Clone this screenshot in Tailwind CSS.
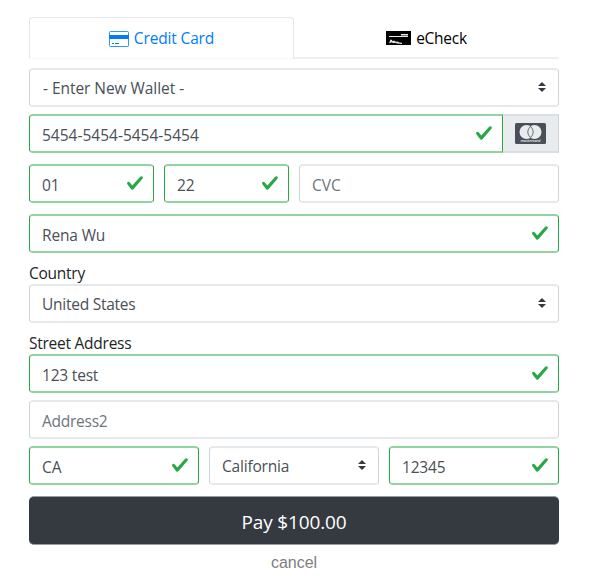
<!DOCTYPE html>
<html lang="en">
<head>
<meta charset="utf-8">
<title>Payment</title>
<script src="https://cdn.jsdelivr.net/npm/@tailwindcss/browser@4"></script>
</head>
<body class="bg-white font-['Open_Sans',sans-serif] text-[15.5px] leading-6 text-[#495057]">
<svg class="hidden">
  <symbol id="check" viewBox="0 0 8 8"><path fill="#28a745" d="M2.3 6.73L.6 4.53c-.4-1.04.46-1.4 1.1-.8l1.1 1.4 3.4-3.8c.6-.63 1.6-.27 1.2.7l-4 4.6c-.43.5-.8.4-1.1.1z"/></symbol>
  <symbol id="sort" viewBox="0 0 4 5"><path fill="#343a40" d="M2 0L0 2h4zm0 5L0 3h4z"/></symbol>
</svg>
<main class="ml-[29px] flex w-[530px] flex-col pt-[17px]">
  <nav class="flex h-[42px]">
    <div class="flex w-[265px] justify-center gap-[5px] rounded-t border border-[#e4e7ea] border-b-[#f8f8f8] pt-[8px] text-[#007bff]">
      <svg class="mt-[5px] h-4 w-5" viewBox="0 0 20 16"><rect x=".5" y=".5" width="19" height="15" rx="1" fill="#fff" stroke="#007bff" stroke-opacity=".8"/><path fill="#007bff" d="M0 4h20v4H0zM3 12h2v1H3zM6 12h4v1H6z"/></svg>
      <span class="tracking-[-0.15px]">Credit Card</span>
    </div>
    <div class="flex w-[265px] justify-center gap-[5px] border-b-2 border-[#f0f0f0] pt-[9px] text-black">
      <svg class="mt-[5px] h-[14px] w-[25px]" viewBox="0 0 25 14"><path d="M0 0h25v14H0z"/><path fill="#e8e8e4" d="M3 5h19v1H3zM15 3h7v1.500h-7z"/><path fill="#e8e8e4" d="M3 12.500L4.500 8.500 6 9 6.500 10.200 8 9.500 10 10.800 12 10.500 13 11.500 16 11.800V13L11 12.500 9 11.800 7.500 12.300 5.500 11.300z"/></svg>
      <span class="tracking-[-0.25px]">eCheck</span>
    </div>
  </nav>

  <div class="mt-[9px] flex h-[39px] justify-between rounded border border-y-2 border-[#ced4da] border-y-[#e6e9ec] pr-3 pl-[13px] pt-[6px]">
    <span class="tracking-[-0.05px]">- Enter New Wallet -</span><svg class="mt-[6px] h-[10px] w-2"><use href="#sort"/></svg>
  </div>

  <div class="mt-[7px] flex h-[39px]">
    <div class="flex w-[474px] justify-between rounded-l border border-y-2 border-[#28a745] border-y-[#93d3a2] pr-[9px] pl-3 pt-[7px]">
      <span>5454-5454-5454-5454</span><svg class="mt-[1px] size-[18px]"><use href="#check"/></svg>
    </div>
    <div class="flex w-[56px] border-y-2 border-r border-[#ced4da] border-y-[#dbdfe3] bg-[#e9ecef] pt-[7px] pl-3">
      <svg class="h-[21px] w-[31px]" viewBox="0 0 31 21"><rect width="31" height="21" rx="1.500" fill="#495057"/><circle cx="11.500" cy="9" r="7" fill="#e9ecef"/><circle cx="19.500" cy="9" r="7" fill="#e9ecef"/><path fill="#e9ecef" stroke="#495057" stroke-width=".8" d="M15.500 3.300Q10 9 15.500 14.700Q21 9 15.500 3.300z"/><text x="15.500" y="19.300" text-anchor="middle" textLength="20" font-family="Open Sans" font-weight="600" font-size="4" fill="#e9ecef">mastercard</text></svg>
    </div>
  </div>

  <div class="mt-[11px] flex h-[39px] gap-[10px]">
    <div class="flex w-[125px] justify-between rounded border border-y-2 border-[#28a745] border-y-[#93d3a2] pr-[9px] pl-3 pt-[7px]"><span class="tracking-[-0.2px]">01</span><svg class="mt-[1px] size-[18px]"><use href="#check"/></svg></div>
    <div class="flex w-[125px] justify-between rounded border border-y-2 border-[#28a745] border-y-[#93d3a2] pr-[9px] pl-3 pt-[7px]"><span class="tracking-[-0.2px]">22</span><svg class="mt-[1px] size-[18px]"><use href="#check"/></svg></div>
    <div class="flex-1 rounded border border-y-2 border-[#ced4da] border-y-[#e6e9ec] pl-3 pt-[7px] text-[#6c757d]">CVC</div>
  </div>

  <div class="mt-[11px] flex h-[39px] justify-between rounded border border-y-2 border-[#28a745] border-y-[#93d3a2] pr-[9px] pl-3 pt-[7px]"><span class="tracking-[-0.15px]">Rena Wu</span><svg class="mt-[1px] size-[18px]"><use href="#check"/></svg></div>

  <label class="mt-[8px] h-[23px] tracking-[-0.25px] text-[#212529]">Country</label>
  <div class="flex h-[39px] justify-between rounded border border-y-2 border-[#ced4da] border-y-[#e6e9ec] pr-3 pl-3 pt-[6px]"><span class="tracking-[-0.25px]">United States</span><svg class="mt-[6px] h-[10px] w-2"><use href="#sort"/></svg></div>

  <label class="mt-[8px] h-[23px] tracking-[-0.25px] text-[#212529]">Street Address</label>
  <div class="flex h-[39px] justify-between rounded border border-y-2 border-[#28a745] border-y-[#93d3a2] pr-[9px] pl-3 pt-[7px]"><span class="tracking-[-0.2px]">123 test</span><svg class="mt-[1px] size-[18px]"><use href="#check"/></svg></div>
  <div class="mt-[7px] h-[39px] rounded border border-y-2 border-[#ced4da] border-y-[#e6e9ec] pl-3 pt-[7px] tracking-[-0.25px] text-[#6c757d]">Address2</div>

  <div class="mt-[7px] flex h-[39px] gap-[10px]">
    <div class="flex w-[170px] justify-between rounded border border-y-2 border-[#28a745] border-y-[#93d3a2] pr-[9px] pl-3 pt-[7px]"><span>CA</span><svg class="mt-[1px] size-[18px]"><use href="#check"/></svg></div>
    <div class="flex w-[170px] justify-between rounded border border-y-2 border-[#ced4da] border-y-[#e6e9ec] pr-3 pl-3 pt-[6px]"><span class="tracking-[-0.2px]">California</span><svg class="mt-[6px] h-[10px] w-2"><use href="#sort"/></svg></div>
    <div class="flex w-[170px] justify-between rounded border border-y-2 border-[#28a745] border-y-[#93d3a2] pr-[9px] pl-3 pt-[7px]"><span class="tracking-[-0.2px]">12345</span><svg class="mt-[1px] size-[18px]"><use href="#check"/></svg></div>
  </div>

  <button class="mt-[11px] h-[49px] rounded-[5px] border-y border-[#999da0] bg-[#343a40] pt-[2px] text-[19px] tracking-[-0.15px] text-white">Pay $100.00</button>
  <a class="mt-[6px] text-center font-['Liberation_Sans',sans-serif] text-base text-[#808080]">cancel</a>
</main>
</body>
</html>
